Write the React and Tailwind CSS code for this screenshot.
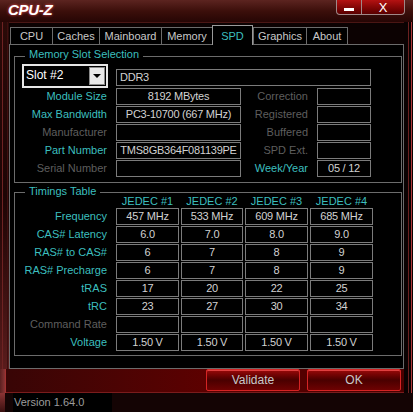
import React from "react";

const tabs = [
  { name: "CPU", w: "w-[42px]" },
  { name: "Caches", w: "w-[47px]" },
  { name: "Mainboard", w: "w-[62px]" },
  { name: "Memory", w: "w-[51px]" },
  { name: "SPD", w: "w-[41px]", active: true },
  { name: "Graphics", w: "w-[53px]" },
  { name: "About", w: "w-[42px]" },
];

const slotRows = [
  { label: "Module Size", on: true, value: "8192 MBytes", side: "Correction" },
  { label: "Max Bandwidth", on: true, value: "PC3-10700 (667 MHz)", side: "Registered" },
  { label: "Manufacturer", on: false, value: "", side: "Buffered" },
  { label: "Part Number", on: true, value: "TMS8GB364F081139PE", side: "SPD Ext." },
  { label: "Serial Number", on: false, value: "", side: "Week/Year", sideOn: true, sideValue: "05 / 12" },
];

const colWidths = ["w-[63px]", "w-[62px]", "w-[63px]", "w-[63px]"];

const timings = [
  { label: "Frequency", on: true, values: ["457 MHz", "533 MHz", "609 MHz", "685 MHz"] },
  { label: "CAS# Latency", on: true, values: ["6.0", "7.0", "8.0", "9.0"] },
  { label: "RAS# to CAS#", on: true, values: ["6", "7", "8", "9"] },
  { label: "RAS# Precharge", on: true, values: ["6", "7", "8", "9"] },
  { label: "tRAS", on: true, values: ["17", "20", "22", "25"] },
  { label: "tRC", on: true, values: ["23", "27", "30", "34"] },
  { label: "Command Rate", on: false, values: ["", "", "", ""] },
  { label: "Voltage", on: true, values: ["1.50 V", "1.50 V", "1.50 V", "1.50 V"] },
];

const Field = ({ children, className = "" }) => (
  <div className={`h-[17px] border border-[#7b7b7b] flex items-center justify-center text-[#d2d2d2] tracking-[-0.25px] whitespace-nowrap overflow-hidden ${className}`}>
    {children}
  </div>
);

const Label = ({ on, children, className = "" }) => (
  <div className={`text-right whitespace-nowrap ${on ? "text-[#3cbfbf]" : "text-[#5e5e5e]"} ${className}`}>
    {children}
  </div>
);

const Group = ({ title, titleTop, className = "", children }) => (
  <div className={`relative border border-[#6c6c6c] ${className}`}>
    <span className={`absolute left-[10px] ${titleTop} bg-black px-[4px] leading-[14px] text-[#3cbfbf]`}>
      {title}
    </span>
    {children}
  </div>
);

const RedButton = ({ children }) => (
  <button className="w-[94px] h-[22px] rounded-[2px] border border-[#d42424] bg-gradient-to-b from-[#9a0a0a] via-[#4a0000] to-[#6e0202] text-[#c9c9c9] text-[12px] leading-none shadow-[inset_0_1px_0_#e04040]">
    {children}
  </button>
);

export default function App() {
  return (
    <div className="w-[413px] h-[412px] flex flex-col overflow-hidden bg-[#100303] text-[11px] font-['Liberation_Sans',Arial,sans-serif]">
      {/* title bar */}
      <div className="h-[22px] flex items-start bg-gradient-to-b from-[#5c2420] via-[#3c0f0b] to-[#260605]">
        <span className="pl-[8px] pt-[2px] text-[15px] leading-[15px] font-bold italic text-white tracking-[-0.3px] [text-shadow:0_0_3px_#ff5050]">
          CPU-Z
        </span>
        <div className="ml-auto mr-[8px] flex">
          <div className="w-[26px] h-[15px] border border-t-0 border-[#a08888] rounded-bl-[4px] bg-gradient-to-b from-[#b41212] to-[#5a0000] flex items-end justify-center pb-[3px]">
            <div className="w-[10px] h-[3px] bg-white" />
          </div>
          <div className="w-[43px] h-[15px] border border-t-0 border-l-0 border-[#a08888] rounded-br-[4px] bg-gradient-to-b from-[#b41212] to-[#5a0000] flex items-center justify-center text-white text-[13px] leading-none">
            X
          </div>
        </div>
      </div>

      {/* window body */}
      <div className="h-[347px] flex">
        <div className="w-[9px] flex bg-gradient-to-b from-[#2a0a08] via-[#1c0505] to-[#5a1c1c]">
          <div className="ml-[2px] w-[1px] bg-[#6e2222]" />
          <div className="ml-[4px] w-[1px] bg-[#3e0e0e]" />
        </div>

        <div className="w-[395px] flex flex-col">
          {/* tabs */}
          <div className="h-[22px] flex items-end pl-[1px] bg-[#0c0202] border-t border-[#4a1614]">
            {tabs.map((t, i) =>
              t.active ? (
                <div
                  key={t.name}
                  className={`${t.w} h-[20px] -mb-[1px] relative z-10 bg-black border border-b-0 border-[#9a9a9a] flex items-center justify-center text-[#3cbfbf] pt-[1px]`}
                >
                  {t.name}
                </div>
              ) : (
                <div
                  key={t.name}
                  className={`${t.w} h-[17px] bg-black border-t border-l border-[#6c6c6c] flex items-center justify-center text-[#c8c8c8] pt-[1px] ${i === tabs.length - 1 ? "border-r" : ""}`}
                >
                  {t.name}
                </div>
              )
            )}
          </div>

          {/* SPD page */}
          <div className="h-[325px] bg-black border border-[#6c6c6c] pl-[4px] pr-[1px] pt-[11px]">
            <Group title="Memory Slot Selection" titleTop="top-[-10px]" className="h-[127px] pt-[7px]">
              <div className="flex h-[23px] mb-[1px]">
                <div className="ml-[7px] w-[86px] h-[24px] border-2 border-[#e6e6e6] bg-black flex items-start justify-between">
                  <span className="pl-[2px] pt-[3px] leading-none text-white text-[12px]">Slot #2</span>
                  <div className="mt-[1px] mr-[1px] w-[16px] h-[18px] bg-[#e8e8e8] border border-[#8a8a8a] flex items-center justify-center">
                    <div className="w-0 h-0 border-l-[4px] border-r-[4px] border-t-[4px] border-l-transparent border-r-transparent border-t-black" />
                  </div>
                </div>
                <Field className="ml-[8px] mt-[5px] w-[255px] justify-start pl-[3px]">DDR3</Field>
              </div>
              <div className="flex flex-col gap-[1px]">
                {slotRows.map((r) => (
                  <div key={r.label} className="flex items-center h-[17px]">
                    <Label on={r.on} className="w-[92px]">{r.label}</Label>
                    <Field className="ml-[9px] w-[125px]">{r.value}</Field>
                    <Label on={!!r.sideOn} className="w-[67px]">{r.side}</Label>
                    <Field className="ml-[9px] w-[54px]">{r.sideValue}</Field>
                  </div>
                ))}
              </div>
            </Group>

            <Group title="Timings Table" titleTop="top-[-9px]" className="mt-[9px] h-[164px]">
              <div className="flex h-[15px] items-center pt-[1px]">
                <div className="w-[101px]" />
                <div className="flex gap-[2px]">
                  {colWidths.map((w, i) => (
                    <div key={i} className={`${w} text-center text-[#3cbfbf]`}>JEDEC #{i + 1}</div>
                  ))}
                </div>
              </div>
              <div className="flex flex-col gap-[1px]">
                {timings.map((r) => (
                  <div key={r.label} className="flex items-center h-[17px]">
                    <Label on={r.on} className="w-[92px]">{r.label}</Label>
                    <div className="ml-[9px] flex gap-[2px]">
                      {r.values.map((v, i) => (
                        <Field key={i} className={colWidths[i]}>{v}</Field>
                      ))}
                    </div>
                  </div>
                ))}
              </div>
            </Group>
          </div>
        </div>

        <div className="w-[9px] flex bg-[#0a0202]">
          <div className="ml-[4px] w-[1px] bg-[#6a2020]" />
          <div className="ml-[2px] w-[1px] bg-[#b03c3c]" />
        </div>
      </div>

      {/* button strip */}
      <div className="h-[24px] flex">
        <div className="w-[6px] bg-gradient-to-r from-[#5a2020] to-[#8a3434] border-r border-[#a03030]" />
        <div className="w-[398px] flex justify-end gap-[7px] pr-[3px] border-b border-[#7a1c1c] bg-gradient-to-r from-[#380505] via-[#5c0000] to-[#4a0000]">
          <RedButton>Validate</RedButton>
          <RedButton>OK</RedButton>
        </div>
        <div className="w-[9px] flex bg-[#0a0202]">
          <div className="ml-[4px] w-[1px] bg-[#6a2020]" />
          <div className="ml-[2px] w-[1px] bg-[#b03c3c]" />
        </div>
      </div>

      {/* status line */}
      <div className="h-[19px] flex bg-[#140404]">
        <div className="w-[5px] bg-gradient-to-b from-[#8a3434] to-[#3a1010]" />
        <div className="ml-[8px] w-[99px] bg-black text-[#9c9c9c] leading-[19px] pl-[1px]">Version 1.64.0</div>
      </div>
    </div>
  );
}
